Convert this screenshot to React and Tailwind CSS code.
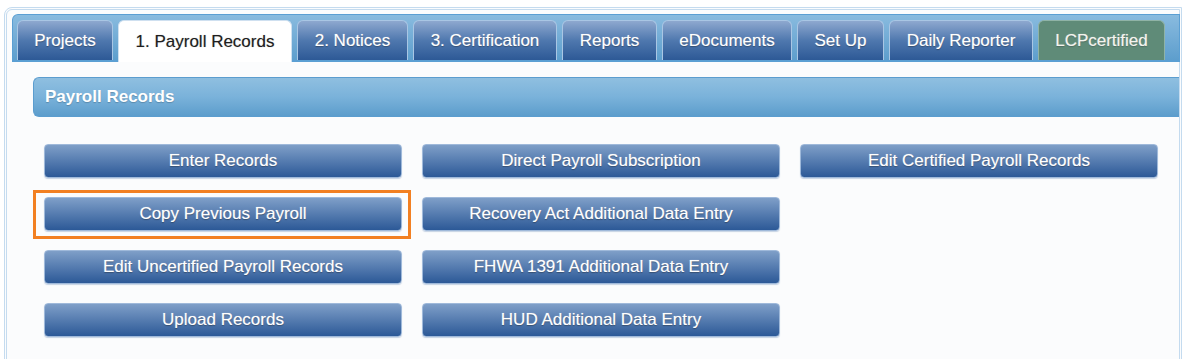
import React from "react";

const tabs = [
  { label: "Projects", w: "w-[96px]" },
  { label: "1. Payroll Records", w: "w-[174px]", active: true },
  { label: "2. Notices", w: "w-[111px]" },
  { label: "3. Certification", w: "w-[144px]" },
  { label: "Reports", w: "w-[95px]" },
  { label: "eDocuments", w: "w-[130px]" },
  { label: "Set Up", w: "w-[87px]" },
  { label: "Daily Reporter", w: "w-[144px]" },
  { label: "LCPcertified", w: "w-[127px]", green: true },
];

const columns = [
  ["Enter Records", "Copy Previous Payroll", "Edit Uncertified Payroll Records", "Upload Records"],
  ["Direct Payroll Subscription", "Recovery Act Additional Data Entry", "FHWA 1391 Additional Data Entry", "HUD Additional Data Entry"],
  ["Edit Certified Payroll Records"],
];

const Tab = ({ label, w, active, green }) => {
  let look = "bg-gradient-to-b from-[#8ea8cf] via-[#4f78ae] to-[#2d5996] text-white border-[#a9c6e4] [text-shadow:0_1px_1px_rgba(0,0,0,0.35),0_0_1px_rgba(255,255,255,0.6)]";
  if (active) look = "bg-white text-[#1e1e1e] border-[#cfe0f0] h-[42px] [text-shadow:0_0_1px_rgba(0,0,0,0.35)]";
  if (green) look = "bg-[#5f8b78] text-[#f4f4ee] border-[#8fb3a6] [text-shadow:0_1px_1px_rgba(0,0,0,0.25),0_0_1px_rgba(255,255,255,0.6)]";
  return (
    <div className={`${w} h-10 shrink-0 flex items-center justify-center rounded-t-[6px] border border-b-0 text-[17px] ${look}`}>
      {label}
    </div>
  );
};

const PayButton = ({ label }) => (
  <div className="h-[34px] flex items-center justify-center rounded-[4px] border border-[#9fb9da] bg-gradient-to-b from-[#7f9fc8] to-[#2c5997] text-white text-[17px] [text-shadow:0_1px_1px_rgba(0,0,0,0.35),0_0_1px_rgba(255,255,255,0.6)] shadow-[0_1px_1px_rgba(120,150,190,0.4)]">
    {label}
  </div>
);

export default function App() {
  return (
    <div className="w-[1182px] h-[359px] bg-white pt-[7px] pl-[4px] overflow-hidden font-['Liberation_Sans',Arial,sans-serif]">
      <div className="h-[360px] w-[1178px] border-[3px] border-double border-[#c4dbef] rounded-tl-[8px] bg-[#fbfcfd] pt-[4px] pl-[5px]">
        {/* tab strip */}
        <div className="h-[48px] w-[1168px] rounded-tl-[6px] border border-b-2 border-[#5b9fd3] bg-gradient-to-b from-[#89bbdf] to-[#5d9ecd] pl-[4px] pt-[5px] flex items-start gap-[5px]">
          {tabs.map((t) => (
            <Tab key={t.label} {...t} />
          ))}
        </div>

        {/* content */}
        <div className="pl-[21px] pt-[15px]">
          <div className="h-10 rounded-l-[6px] border border-r-0 border-[#5b9dcf] bg-gradient-to-b from-[#8fbfe0] via-[#7ab2da] to-[#5c9dcc] flex items-center pl-[11px] text-white text-[17px] font-bold [text-shadow:0_1px_1px_rgba(0,0,0,0.2)]">
            Payroll Records
          </div>

          <div className="pl-[11px] pt-[27px] flex gap-5">
            {columns.map((col, i) => (
              <div key={i} className="w-[358px] flex flex-col gap-[19px]">
                {col.map((label) => (
                  <div key={label} className="relative">
                    <PayButton label={label} />
                    {label === "Copy Previous Payroll" && (
                      <div className="absolute left-[-11px] top-[-7px] right-[-9px] bottom-[-8px] border-[3px] border-[#f28022] pointer-events-none" />
                    )}
                  </div>
                ))}
              </div>
            ))}
          </div>
        </div>
      </div>
    </div>
  );
}
